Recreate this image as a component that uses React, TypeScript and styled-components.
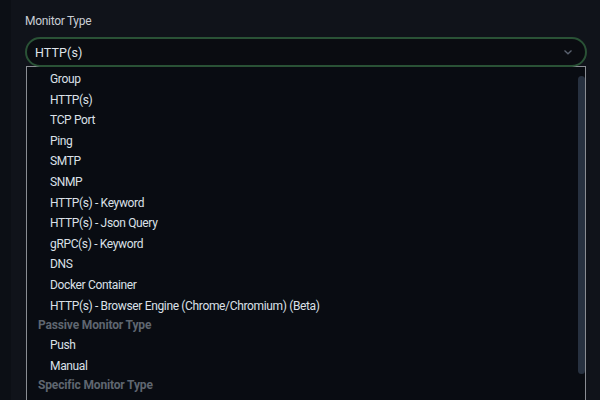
import { useEffect, useRef } from 'react';
import styled, { createGlobalStyle } from 'styled-components';

const GlobalStyle = createGlobalStyle`
  html, body {
    margin: 0;
    padding: 0;
    background: #0c0f15;
    font-family: Roboto, 'Noto Sans', sans-serif;
  }
`;

const Page = styled.div`
  width: 600px;
  height: 400px;
  overflow: hidden;
  display: flex;
  background: #0c0f15;
`;

const Panel = styled.div`
  flex: 1;
  margin-left: 11px;
  background: #10131a;
  padding: 12px 13px 0 14px;
  display: flex;
  flex-direction: column;
`;

const Label = styled.label`
  color: #c9cdd4;
  font-size: 12px;
  letter-spacing: -0.3px;
  line-height: 18px;
  margin-bottom: 7px;
`;

const Field = styled.div`
  position: relative;
  display: flex;
  flex-direction: column;
`;

const Select = styled.div`
  height: 30px;
  box-sizing: border-box;
  border: 2px solid #2a5236;
  border-radius: 15px;
  background: #0a0c11;
  display: flex;
  align-items: center;
  justify-content: space-between;
  padding: 0 12px 0 8px;
  color: #dfe3ea;
  font-size: 12.5px;
  letter-spacing: 0.1px;
  position: relative;
  z-index: 2;
`;

const Chevron = styled.svg`
  width: 10px;
  height: 10px;
  color: #5b6270;
`;

const ListWrap = styled.div`
  position: relative;
  margin: -1px 1px 0 1px;
  height: 340px;
  border: 1px solid #8a8d93;
  background: #090c12;
  z-index: 1;
`;

const ListBox = styled.div`
  height: 100%;
  overflow: hidden;
`;

const ScrollThumb = styled.div`
  position: absolute;
  top: 9px;
  right: 0;
  width: 7px;
  height: 298px;
  border-radius: 4px;
  background: #273140;
`;

const GroupTitle = styled.div`
  color: #5f6670;
  font-size: 12px;
  font-weight: 700;
  letter-spacing: -0.15px;
  line-height: 19px;
  padding-left: 11px;
`;

const Option = styled.div`
  color: #dbe0e8;
  font-size: 12px;
  letter-spacing: -0.35px;
  line-height: 20.6px;
  padding-left: 23px;
  white-space: nowrap;
`;

const groups = [
  {
    title: 'General Monitor Type',
    items: [
      'Group',
      'HTTP(s)',
      'TCP Port',
      'Ping',
      'SMTP',
      'SNMP',
      'HTTP(s) - Keyword',
      'HTTP(s) - Json Query',
      'gRPC(s) - Keyword',
      'DNS',
      'Docker Container',
      'HTTP(s) - Browser Engine (Chrome/Chromium) (Beta)',
    ],
  },
  { title: 'Passive Monitor Type', items: ['Push', 'Manual'] },
  {
    title: 'Specific Monitor Type',
    items: ['Steam Game Server', 'GameDig', 'MQTT', 'RabbitMQ', 'Kafka Producer'],
  },
];

export default function App() {
  const listRef = useRef<HTMLDivElement>(null);

  useEffect(() => {
    if (listRef.current) listRef.current.scrollTop = 17;
  }, []);

  return (
    <Page>
      <GlobalStyle />
      <Panel>
        <Label>Monitor Type</Label>
        <Field>
          <Select>
            <span>HTTP(s)</span>
            <Chevron viewBox="0 0 10 10" fill="none">
              <path d="M1.5 3.5 L5 6.8 L8.5 3.5" stroke="currentColor" strokeWidth="1.3" />
            </Chevron>
          </Select>
          <ListWrap>
            <ListBox ref={listRef}>
              {groups.map((g) => (
                <div key={g.title}>
                  <GroupTitle>{g.title}</GroupTitle>
                  {g.items.map((it) => (
                    <Option key={it}>{it}</Option>
                  ))}
                </div>
              ))}
            </ListBox>
            <ScrollThumb />
          </ListWrap>
        </Field>
      </Panel>
    </Page>
  );
}
